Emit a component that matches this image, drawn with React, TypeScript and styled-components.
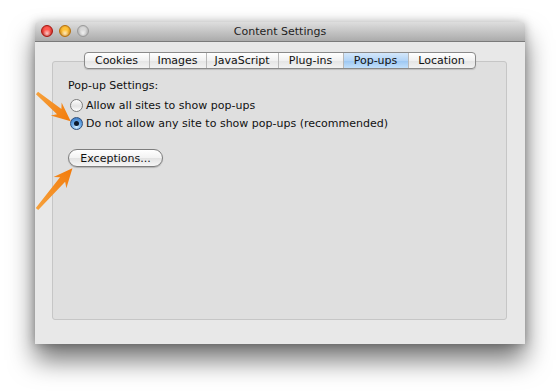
import styled, { createGlobalStyle } from "styled-components";

const GlobalStyle = createGlobalStyle`
  html, body {
    margin: 0;
    padding: 0;
    background: #ffffff;
  }
  body {
    font-family: "DejaVu Sans", "Liberation Sans", sans-serif;
    color: #111;
  }
`;

const tabs = [
    { label: "Cookies", width: 64 },
    { label: "Images", width: 57 },
    { label: "JavaScript", width: 72 },
    { label: "Plug-ins", width: 65 },
    { label: "Pop-ups", width: 65, active: true },
    { label: "Location", width: 67 },
];

const Page = styled.div`
    position: relative;
    width: 560px;
    height: 391px;
    padding: 22px 0 0 35px;
    box-sizing: border-box;
    overflow: hidden;
`;

const Window = styled.div`
    width: 490px;
    height: 322px;
    display: flex;
    flex-direction: column;
    background: #e8e8e8;
    border-radius: 4px 4px 0 0;
    box-shadow: 0 16px 26px rgba(0,0,0,0.55), 0 0 10px rgba(0,0,0,0.25);
`;

const TitleBar = styled.div`
    position: relative;
    height: 19px;
    display: flex;
    align-items: center;
    justify-content: center;
    background: linear-gradient(#dedede, #ababab);
    border-bottom: 1px solid #7a7a7a;
    border-radius: 4px 4px 0 0;
    font-size: 11px;
    color: #1e1e1e;
    > .lights {
        position: absolute;
        left: 6px;
        top: 3px;
        display: flex;
        gap: 6px;
    }
`;

const Light = styled.span<{ $color: string; $edge: string }>`
    width: 12px;
    height: 12px;
    border-radius: 50%;
    box-sizing: border-box;
    border: 1px solid ${p => p.$edge};
    background: radial-gradient(circle at 50% 75%, #ffffffb0 0%, transparent 45%),
        radial-gradient(circle at 50% 40%, ${p => p.$color} 30%, ${p => p.$edge} 100%);
`;

const Body = styled.div`
    flex: 1;
    display: flex;
    flex-direction: column;
    padding: 10px 18px 24px 17px;
`;

const TabBar = styled.div`
    position: relative;
    z-index: 1;
    align-self: center;
    display: flex;
    height: 15px;
    margin-bottom: -8px;
    border: 1px solid #8a8a8a;
    border-radius: 4px;
    overflow: hidden;
    background: linear-gradient(#ffffff, #f1f1f1 50%, #e4e4e4 51%, #f2f2f2);
    box-shadow: 0 1px 1px rgba(0,0,0,0.15);
`;

const Tab = styled.div<{ $active?: boolean }>`
    flex: none;
    display: flex;
    align-items: center;
    justify-content: center;
    font-size: 11px;
    color: #111;
    border-left: 1px solid #b8b8b8;
    box-sizing: border-box;
    &:first-child { border-left: none; }
    background: ${p => p.$active ? "linear-gradient(#d4e7fb, #b3d4f6 50%, #9bc6f2 51%, #c2e0fb)" : "transparent"};
`;

const Panel = styled.div`
    flex: 1;
    border: 1px solid #c6c6c6;
    border-radius: 3px;
    background: #dfdfdf;
    padding: 17px 15px 0;
    display: flex;
    flex-direction: column;
    align-items: flex-start;
    font-size: 11px;
`;

const SectionLabel = styled.div`
    line-height: 14px;
    margin-bottom: 3px;
`;

const RadioRow = styled.label`
    display: flex;
    align-items: center;
    height: 18px;
    gap: 3px;
    padding-left: 2px;
`;

const Radio = styled.span<{ $checked?: boolean }>`
    position: relative;
    width: 13px;
    height: 13px;
    border-radius: 50%;
    box-sizing: border-box;
    border: 1px solid ${p => p.$checked ? "#2f4f7a" : "#7c7c7c"};
    background: ${p => p.$checked
        ? "radial-gradient(circle at 50% 80%, #d8f0ff 0%, #6aa9e6 45%, #2f6fbf 100%)"
        : "linear-gradient(#fdfdfd, #e4e4e4 55%, #ffffff)"};
    &::after {
        content: "";
        display: ${p => p.$checked ? "block" : "none"};
        position: absolute;
        left: 3px;
        top: 3px;
        width: 5px;
        height: 5px;
        border-radius: 50%;
        background: #0d1a2c;
    }
`;

const PillButton = styled.button`
    margin-top: 17px;
    width: 95px;
    height: 18px;
    padding: 0;
    border: 1px solid #7d7d7d;
    border-radius: 9px;
    background: linear-gradient(#ffffff, #f2f2f2 50%, #e2e2e2 51%, #f6f6f6);
    box-shadow: 0 1px 1px rgba(0,0,0,0.2);
    font-family: inherit;
    font-size: 11px;
    color: #111;
`;

const Callout = styled.svg`
    position: absolute;
    left: 0;
    top: 0;
    pointer-events: none;
`;

function Arrow(props: { x: number; y: number; angle: number; len: number }) {
    const { x, y, angle, len } = props;
    const h = len - 15;
    return (
        <g transform={`translate(${x} ${y}) rotate(${angle})`}>
            <polygon
                points={`0,-1.6 ${h},-3.4 ${h - 4},-8.5 ${len},0 ${h - 4},8.5 ${h},3.4 0,1.6`}
                fill="url(#orange)"
            />
        </g>
    );
}

export default function App() {
    return (
        <Page>
            <GlobalStyle />
            <Window>
                <TitleBar>
                    <div className="lights">
                        <Light $color="#ff5a52" $edge="#a8140e" />
                        <Light $color="#ffc23a" $edge="#b7700c" />
                        <Light $color="#d8d8d8" $edge="#9a9a9a" />
                    </div>
                    Content Settings
                </TitleBar>
                <Body>
                    <TabBar>
                        {tabs.map(t => (
                            <Tab key={t.label} $active={t.active} style={{ width: t.width }}>
                                {t.label}
                            </Tab>
                        ))}
                    </TabBar>
                    <Panel>
                        <SectionLabel>Pop-up Settings:</SectionLabel>
                        <RadioRow>
                            <Radio />
                            Allow all sites to show pop-ups
                        </RadioRow>
                        <RadioRow>
                            <Radio $checked />
                            Do not allow any site to show pop-ups (recommended)
                        </RadioRow>
                        <PillButton>Exceptions...</PillButton>
                    </Panel>
                </Body>
            </Window>
            <Callout width="560" height="391">
                <defs>
                    <linearGradient id="orange" x1="0" y1="0" x2="1" y2="0">
                        <stop offset="0" stopColor="#f6a13c" />
                        <stop offset="1" stopColor="#f27a0a" />
                    </linearGradient>
                </defs>
                <Arrow x={37} y={93} angle={40} len={44} />
                <Arrow x={37} y={209} angle={-49} len={54} />
            </Callout>
        </Page>
    );
}
